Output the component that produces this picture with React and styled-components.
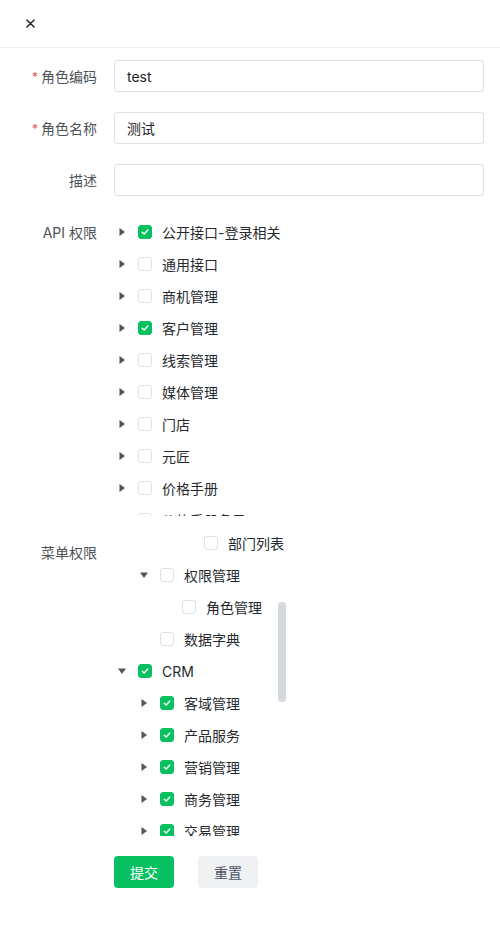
import React, { useEffect, useRef } from 'react'
import styled, { createGlobalStyle } from 'styled-components'

const GlobalStyle = createGlobalStyle`
body{
    margin: 0;
    background: #fff;
    font-family: "Inter", "Noto Sans CJK SC", sans-serif;
    font-size: 14px;
    color: #333639;
}
`

const Page = styled.div`
width: 500px;
height: 947px;
background: #fff;
`
const Header = styled.div`
height: 47px;
border-bottom: 1px solid #efeff5;
display: flex;
align-items: center;
padding-left: 23px;
`
const CloseBtn = styled.button`
border: none;
background: none;
padding: 0;
width: 14px;
height: 14px;
display: flex;
align-items: center;
justify-content: center;
color: #1f2225;
`
const Form = styled.form`
padding: 12px 16px 0 0;
display: flex;
flex-direction: column;
gap: 20px;
`
const Row = styled.div`
display: flex;
align-items: flex-start;
`
const Label = styled.label`
flex-shrink: 0;
height: 32px;
display: flex;
align-items: center;
justify-content: flex-end;
color: #4e5358;
box-sizing: border-box;
width: 114px;
padding-right: 17px;
span{
    color: #e45454;
    margin-right: 3px;
    font-size: 12px;
}
`
const Input = styled.input`
flex: 1;
height: 32px;
box-sizing: border-box;
border: 1px solid #e0e0e6;
border-radius: 3px;
padding: 0 12px;
font-family: inherit;
font-size: 14px;
color: #1f2225;
outline: none;
`
const TreeBox = styled.div`
position: relative;
height: 300px;
width: ${p => p.$width}px;
`
const TreeScroll = styled.div`
height: 100%;
overflow: hidden;
`
const Thumb = styled.div`
position: absolute;
right: 0;
top: 66px;
width: 8px;
height: 100px;
border-radius: 4px;
background: #d4d7de;
`
const Node = styled.div`
display: flex;
align-items: center;
height: 32px;
padding-left: ${p => p.$level * 22}px;
white-space: nowrap;
`
const Switcher = styled.span`
width: 16px;
height: 32px;
display: flex;
align-items: center;
justify-content: center;
flex-shrink: 0;
`
const Box = styled.span`
width: 14px;
height: 14px;
box-sizing: border-box;
margin-left: 8px;
border-radius: 3px;
border: 1px solid ${p => (p.$checked ? '#07c160' : '#e0e0e6')};
background: ${p => (p.$checked ? '#07c160' : '#fff')};
display: flex;
align-items: center;
justify-content: center;
flex-shrink: 0;
`
const NodeText = styled.span`
margin-left: 10px;
color: #262a2e;
`
const Buttons = styled.div`
display: flex;
gap: 24px;
padding-left: 114px;
`
const Button = styled.button`
width: 60px;
height: 32px;
border: none;
border-radius: 4px;
font-family: inherit;
font-size: 14px;
background: ${p => (p.$primary ? '#07c160' : '#f0f1f3')};
color: ${p => (p.$primary ? '#fff' : '#4b5263')};
`

function Arrow({ open }) {
    return (
        <svg width="10" height="10" viewBox="0 0 10 10" style={{ transform: open ? 'rotate(90deg)' : 'none' }}>
            <path d="M2.5 1 L8 5 L2.5 9 Z" fill="#50555f" />
        </svg>
    )
}

function TreeNode({ node }) {
    return (
        <Node $level={node.level}>
            <Switcher>{node.arrow ? <Arrow open={node.open} /> : null}</Switcher>
            <Box $checked={node.checked}>
                {node.checked && (
                    <svg width="8" height="8" viewBox="0 0 8 8">
                        <path d="M1.2 4.2 L3.2 6 L6.8 2" fill="none" stroke="#fff" strokeWidth="1.4" strokeLinecap="round" strokeLinejoin="round" />
                    </svg>
                )}
            </Box>
            <NodeText>{node.label}</NodeText>
        </Node>
    )
}

const apiNodes = [
    { label: '公开接口-登录相关', checked: true },
    { label: '通用接口' },
    { label: '商机管理' },
    { label: '客户管理', checked: true },
    { label: '线索管理' },
    { label: '媒体管理' },
    { label: '门店' },
    { label: '元匠' },
    { label: '价格手册' },
    { label: '价格手册条目' },
    { label: '订单管理' },
].map(n => ({ level: 0, arrow: true, ...n }))

const menuNodes = [
    { label: '系统管理', level: 0, arrow: true, open: true },
    { label: '组织管理', level: 1, arrow: true, open: true },
    { label: '用户管理', level: 2, arrow: true, open: true },
    { label: '用户列表', level: 3 },
    { label: '部门管理', level: 2, arrow: true, open: true },
    { label: '岗位列表', level: 3 },
    { label: '部门列表', level: 3 },
    { label: '权限管理', level: 1, arrow: true, open: true },
    { label: '角色管理', level: 2 },
    { label: '数据字典', level: 1 },
    { label: 'CRM', level: 0, arrow: true, open: true, checked: true },
    { label: '客域管理', level: 1, arrow: true, checked: true },
    { label: '产品服务', level: 1, arrow: true, checked: true },
    { label: '营销管理', level: 1, arrow: true, checked: true },
    { label: '商务管理', level: 1, arrow: true, checked: true },
    { label: '交易管理', level: 1, arrow: true, checked: true },
    { label: '财务管理', level: 1, arrow: true, checked: true },
    { label: '售后管理', level: 1, arrow: true, checked: true },
    { label: '数据统计', level: 1, arrow: true, checked: true },
    { label: '报表中心', level: 1, arrow: true, checked: true },
    { label: '消息中心', level: 1, arrow: true, checked: true },
    { label: '工作台', level: 0, arrow: true },
    { label: '日志管理', level: 0, arrow: true },
    { label: '系统设置', level: 0, arrow: true },
    { label: '帮助中心', level: 0, arrow: true },
    { label: '个人中心', level: 0, arrow: true },
    { label: '开放平台', level: 0, arrow: true },
    { label: '其他', level: 0, arrow: true },
]

function App() {
    const menuRef = useRef(null)
    useEffect(() => {
        if (menuRef.current) menuRef.current.scrollTop = 201
    }, [])
    return (
        <>
            <GlobalStyle />
            <Page>
                <Header>
                    <CloseBtn type="button" aria-label="close">
                        <svg width="9" height="9" viewBox="0 0 10 10">
                            <path d="M1 1 L9 9 M9 1 L1 9" stroke="currentColor" strokeWidth="1.6" strokeLinecap="round" />
                        </svg>
                    </CloseBtn>
                </Header>
                <Form onSubmit={e => e.preventDefault()}>
                    <Row>
                        <Label><span>*</span>角色编码</Label>
                        <Input defaultValue="test" />
                    </Row>
                    <Row>
                        <Label><span>*</span>角色名称</Label>
                        <Input defaultValue="测试" />
                    </Row>
                    <Row>
                        <Label>描述</Label>
                        <Input />
                    </Row>
                    <Row>
                        <Label>API 权限</Label>
                        <TreeBox $width={260}>
                            <TreeScroll>
                                {apiNodes.map(n => <TreeNode key={n.label} node={n} />)}
                            </TreeScroll>
                        </TreeBox>
                    </Row>
                    <Row>
                        <Label>菜单权限</Label>
                        <TreeBox $width={172}>
                            <TreeScroll ref={menuRef}>
                                {menuNodes.map(n => <TreeNode key={n.label} node={n} />)}
                            </TreeScroll>
                            <Thumb />
                        </TreeBox>
                    </Row>
                    <Buttons>
                        <Button type="submit" $primary>提交</Button>
                        <Button type="button">重置</Button>
                    </Buttons>
                </Form>
            </Page>
        </>
    )
}

export default App
